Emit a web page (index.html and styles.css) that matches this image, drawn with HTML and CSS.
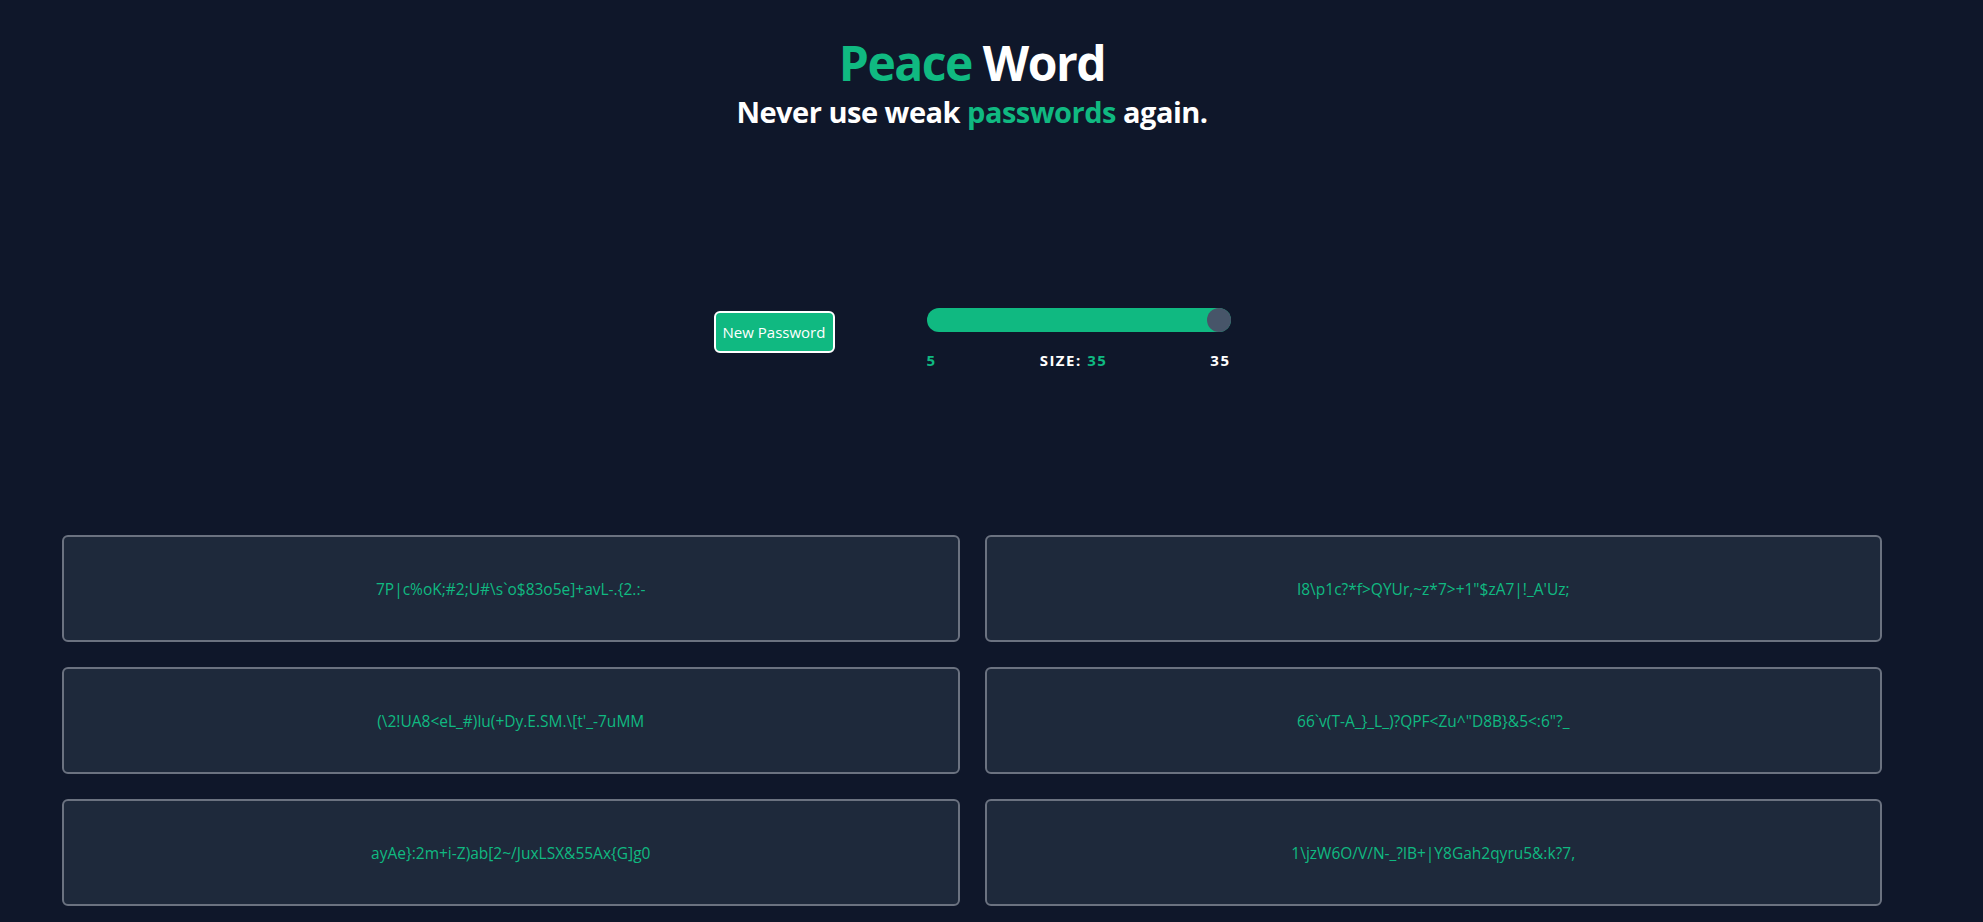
FILE: index.html
```html
<!DOCTYPE html>
<html lang="en">
<head>
<meta charset="utf-8">
<title>Peace Word</title>
<link rel="stylesheet" href="styles.css">
</head>
<body>
<div class="page">
  <header class="hero">
    <h1 class="title"><span class="accent">Peace</span> Word</h1>
    <p class="subtitle">Never use weak <span class="accent">passwords</span> again.</p>
  </header>

  <section class="controls">
    <button class="btn" type="button">New Password</button>
    <div class="slider">
      <input class="range" type="range" min="5" max="35" value="35">
      <div class="labels">
        <span class="accent">5</span>
        <span>SIZE: <span class="accent">35</span></span>
        <span>35</span>
      </div>
    </div>
  </section>

  <section class="grid">
    <div class="card">7P|c%oK;#2;U#\s`o$83o5e]+avL-.{2.:-</div>
    <div class="card">I8\p1c?*f&gt;QYUr,~z*7&gt;+1"$zA7|!_A'Uz;</div>
    <div class="card">(\2!UA8&lt;eL_#)lu(+Dy.E.SM.\[t'_-7uMM</div>
    <div class="card">66`v(T-A_}_L_)?QPF&lt;Zu^"D8B}&amp;5&lt;:6"?_</div>
    <div class="card">ayAe}:2m+i-Z)ab[2~/JuxLSX&amp;55Ax{G]g0</div>
    <div class="card">1\jzW6O/V/N-_?lB+|Y8Gah2qyru5&amp;:k?7,</div>
  </section>
</div>
</body>
</html>
```

FILE: styles.css
```css
* { box-sizing: border-box; }

html, body {
  margin: 0;
  padding: 0;
  background: #0f172a;
  overflow: hidden;
}

body {
  font-family: "Open Sans", "Noto Sans", "DejaVu Sans", sans-serif;
  color: #ffffff;
  height: 922px;
}

.page {
  width: 1944px;
}

.accent { color: #10b981; }

.hero {
  display: flex;
  flex-direction: column;
  align-items: center;
  padding-top: 39px;
}

.title {
  margin: 0;
  font-size: 48px;
  line-height: 48px;
  font-weight: 700;
  letter-spacing: -1.5px;
}

.subtitle {
  margin: 8px 0 0;
  font-size: 29px;
  line-height: 34px;
  font-weight: 700;
  letter-spacing: -0.5px;
}

.controls {
  display: flex;
  justify-content: center;
  align-items: flex-start;
  gap: 92px;
  margin-top: 179px;
}

.btn {
  margin-top: 3px;
  height: 42px;
  width: 121px;
  padding: 0;
  border: 2px solid #ffffff;
  border-radius: 6px;
  background: #10b981;
  color: #ffffff;
  font-family: inherit;
  font-size: 15px;
}

.slider {
  width: 304px;
  display: flex;
  flex-direction: column;
}

.range {
  -webkit-appearance: none;
  appearance: none;
  display: block;
  margin: 0;
  width: 304px;
  height: 24px;
  border-radius: 12px;
  background: #10b981;
  outline: none;
}

.range::-webkit-slider-runnable-track {
  height: 24px;
  border-radius: 12px;
  background: transparent;
}

.range::-webkit-slider-thumb {
  -webkit-appearance: none;
  appearance: none;
  width: 24px;
  height: 24px;
  border-radius: 50%;
  background: #475569;
  border: none;
}

.labels {
  display: flex;
  justify-content: space-between;
  margin-top: 18px;
  font-size: 15px;
  line-height: 20px;
  font-weight: 700;
  letter-spacing: 0.1em;
}

.grid {
  display: grid;
  grid-template-columns: 1fr 1fr;
  column-gap: 25px;
  row-gap: 25px;
  padding: 0 62px;
  margin-top: 165px;
}

.card {
  height: 107px;
  display: flex;
  align-items: center;
  justify-content: center;
  background: #1e293b;
  border: 2px solid #6b7280;
  border-radius: 6px;
  color: #10b981;
  font-size: 15.5px;
}
```
